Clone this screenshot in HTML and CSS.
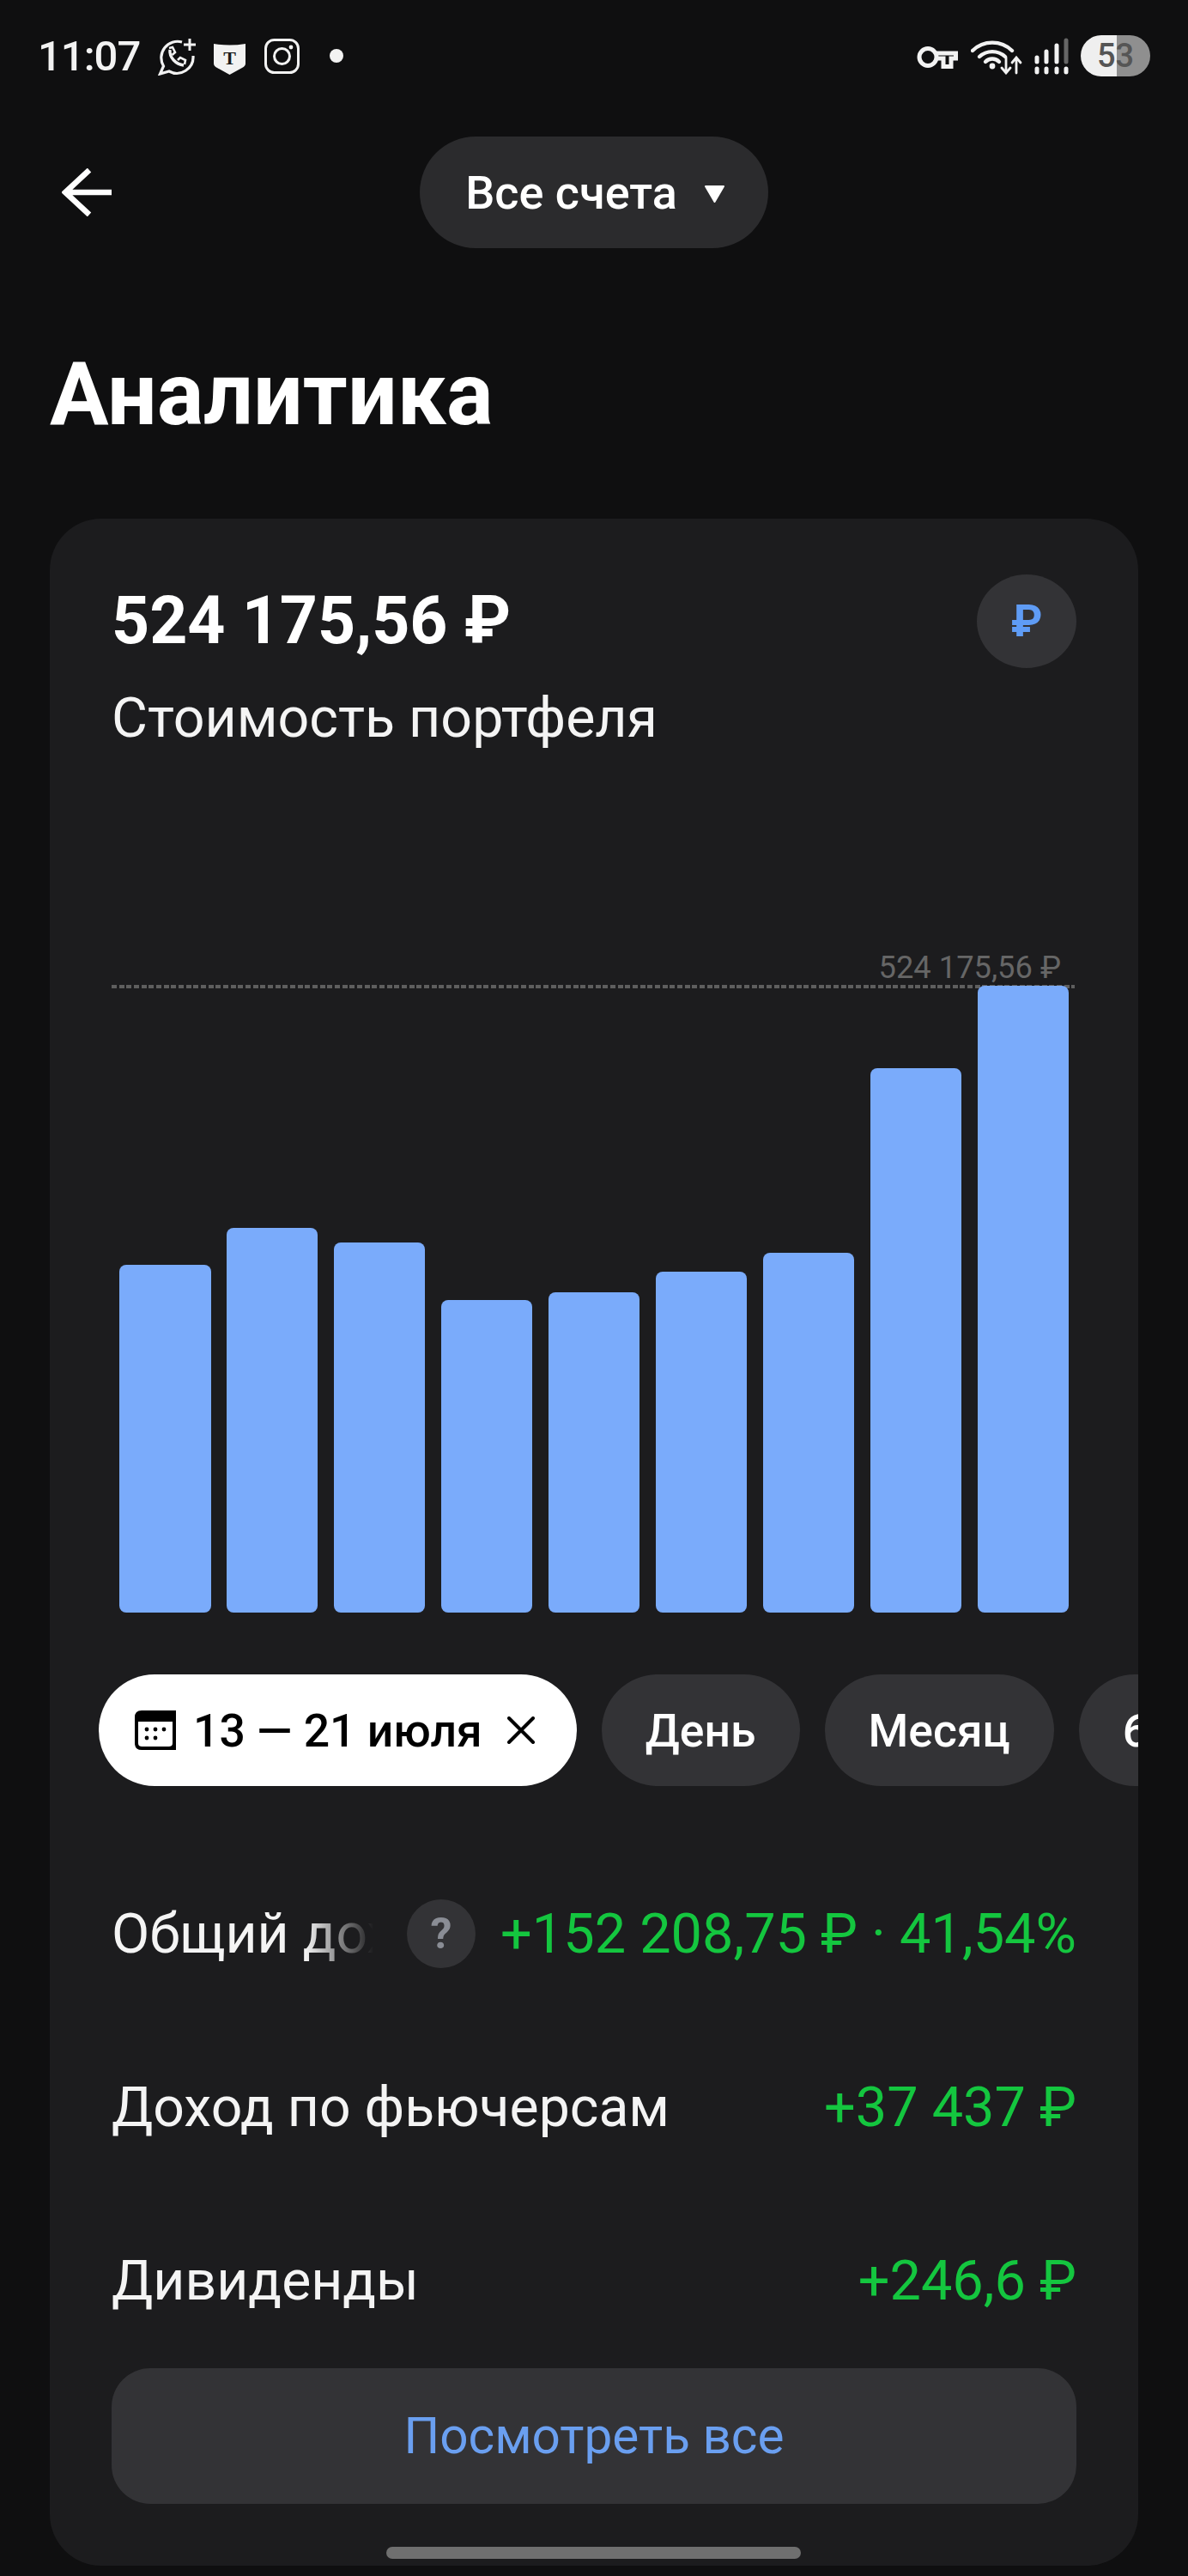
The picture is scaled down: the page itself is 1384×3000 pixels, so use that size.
FILE: index.html
```html
<!DOCTYPE html>
<html lang="ru">
<head>
    <meta charset="UTF-8">
    <meta name="viewport" content="width=device-width, initial-scale=1.0">
    <title>Аналитика</title>
    <link rel="stylesheet" href="styles.css">
</head>
<body>
    <div class="status-bar">
        <div class="status-left">
            <span class="time">11:07</span>
            <svg class="icon-whatsapp" viewBox="0 0 46 45" fill="none" stroke="#f2f2f2" stroke-width="3.2">
                <path d="M28 6 A19 19 0 0 0 6.5 34 L2.5 43 L13 40 A19 19 0 0 0 41 22"/>
                <path d="M37 2 V16 M30 9 H44" stroke-width="3"/>
                <path d="M14 15 C13 24 21 32 30 33" stroke-width="3.4"/>
                <path d="M13 13 L17 12 L20 18 L16.5 21 M23 27 L26 24 L32 27 L31 32" stroke-width="2.6"/>
            </svg>
            <svg class="icon-shield" viewBox="0 0 37 37">
                <path d="M0 1 Q18.5 4 37 1 V24 Q37 27 33 29 L18.5 37 L4 29 Q0 27 0 24 Z" fill="#f2f2f2"/>
                <text x="18.5" y="25" text-anchor="middle" class="shield-letter">T</text>
            </svg>
            <svg class="icon-insta" viewBox="0 0 41 41" fill="none" stroke="#f2f2f2" stroke-width="3">
                <rect x="1.5" y="1.5" width="38" height="38" rx="10"/>
                <circle cx="20.5" cy="20.5" r="9"/>
                <circle cx="31" cy="10" r="2.4" fill="#f2f2f2" stroke="none"/>
            </svg>
            <span class="status-dot"></span>
        </div>
        <div class="status-right">
            <svg class="icon-key" viewBox="0 0 48 27" fill="none" stroke="#f2f2f2" stroke-width="5">
                <circle cx="13" cy="13.5" r="10"/>
                <path d="M23 9 H45.5 V15 H40 V24.5 H31 V15 H23"/>
            </svg>
            <svg class="icon-wifi" viewBox="0 0 60 43" fill="none" stroke="#f2f2f2" stroke-width="4.4" stroke-linecap="round">
                <path d="M2 15 A33 33 0 0 1 48 15"/>
                <path d="M10 22 A22 22 0 0 1 40 22"/>
                <path d="M17 28 A11 11 0 0 1 33 28"/>
                <circle cx="25" cy="33" r="3.4" fill="#f2f2f2" stroke="none"/>
                <path d="M41 23 V41 M36 35 L41 41 L46 35" stroke-width="2.8"/>
                <path d="M53 41 V24 M48 29 L53 23 L58 29" stroke-width="2.8"/>
            </svg>
            <svg class="icon-signal" viewBox="0 0 40 43" stroke-linecap="round" stroke-width="5" fill="none">
                <path d="M3 23 V28 M3 36 V40 M14 16 V28 M14 36 V40 M26 9 V28 M26 36 V40 M37 36 V40" stroke="#f2f2f2"/>
                <path d="M37 3 V28" stroke="#666"/>
            </svg>
            <span class="battery">53</span>
        </div>
    </div>

    <div class="top-nav">
        <svg class="icon-back" viewBox="0 0 58 56" fill="none" stroke="#fff" stroke-width="6.5">
            <path d="M32 2 L4 28 L32 54 M4 28 H58"/>
        </svg>
        <div class="account-pill">
            <span>Все счета</span>
            <svg class="icon-caret" viewBox="0 0 25 20"><path d="M2 1 H23 L12.5 19 Z" fill="#fff" stroke="#fff" stroke-width="2" stroke-linejoin="round"/></svg>
        </div>
    </div>

    <h1 class="page-title">Аналитика</h1>

    <div class="card">
        <div class="card-head">
            <div class="amount">524 175,56 ₽</div>
            <div class="currency-btn">₽</div>
        </div>
        <p class="subtitle">Стоимость портфеля</p>

        <div class="chart">
            <div class="chart-label">524 175,56 ₽</div>
            <div class="chart-line"></div>
            <div class="bars">
                <div class="bar" style="height: 405px"></div>
                <div class="bar" style="height: 448px"></div>
                <div class="bar" style="height: 431px"></div>
                <div class="bar" style="height: 364px"></div>
                <div class="bar" style="height: 373px"></div>
                <div class="bar" style="height: 397px"></div>
                <div class="bar" style="height: 419px"></div>
                <div class="bar" style="height: 634px"></div>
                <div class="bar" style="height: 730px"></div>
            </div>
        </div>

        <div class="chips">
            <div class="chip chip-active">
                <svg class="icon-calendar" viewBox="0 0 48 46">
                    <path d="M8 0 H48 V46 H8 Q0 46 0 38 V8 Q0 0 8 0 Z" fill="#000"/>
                    <path d="M4 13 H44 V38 Q44 42 40 42 H8 Q4 42 4 38 Z" fill="#fff"/>
                    <g fill="#000">
                        <circle cx="14" cy="22" r="2.4"/>
                        <circle cx="24" cy="22" r="2.4"/>
                        <circle cx="34" cy="22" r="2.4"/>
                        <circle cx="14" cy="32" r="2.4"/>
                        <circle cx="24" cy="32" r="2.4"/>
                    </g>
                </svg>
                <span>13 — 21 июля</span>
                <svg class="icon-close" viewBox="0 0 32 32" fill="none" stroke="#000" stroke-width="4" stroke-linecap="round">
                    <path d="M2 2 L30 30 M30 2 L2 30"/>
                </svg>
            </div>
            <div class="chip">День</div>
            <div class="chip">Месяц</div>
            <div class="chip">6 месяцев</div>
        </div>

        <div class="rows">
            <div class="row">
                <span class="row-label row-label-fade">Общий доход</span>
                <span class="help">?</span>
                <span class="row-value">+152 208,75 ₽ · 41,54%</span>
            </div>
            <div class="row">
                <span class="row-label">Доход по фьючерсам</span>
                <span class="row-value">+37 437 ₽</span>
            </div>
            <div class="row">
                <span class="row-label">Дивиденды</span>
                <span class="row-value">+246,6 ₽</span>
            </div>
        </div>

        <div class="all-btn">Посмотреть все</div>
    </div>

    <div class="home-bar"></div>
</body>
</html>
```

FILE: styles.css
```css
* {
    margin: 0;
    padding: 0;
    box-sizing: border-box;
    font-family: Roboto, "Noto Sans", sans-serif;
}

body {
    position: relative;
    width: 1384px;
    height: 3000px;
    overflow: hidden;
    background: #0f0f10;
    color: #fff;
}

svg {
    display: block;
    flex: none;
}

/* status bar */
.status-bar {
    display: flex;
    justify-content: space-between;
    align-items: center;
    height: 130px;
    padding: 0 44px;
}

.status-left,
.status-right {
    display: flex;
    align-items: center;
}

.time {
    width: 117px;
    font-size: 49px;
    font-weight: 500;
    letter-spacing: -1px;
    color: #f2f2f2;
    white-space: nowrap;
}

.icon-whatsapp {
    width: 46px;
    height: 45px;
    margin-left: 23px;
}

.icon-shield {
    width: 37px;
    height: 37px;
    margin-left: 19px;
    margin-top: 7px;
}

.shield-letter {
    font-family: "Liberation Serif", serif;
    font-size: 22px;
    font-weight: 700;
    fill: #1a1a1a;
}

.icon-insta {
    width: 41px;
    height: 41px;
    margin-left: 22px;
}

.status-dot {
    width: 16px;
    height: 16px;
    margin-left: 35px;
    border-radius: 50%;
    background: #f2f2f2;
}

.icon-key {
    width: 48px;
    height: 27px;
    margin-top: 3px;
}

.icon-wifi {
    width: 60px;
    height: 43px;
    margin-left: 15px;
    margin-top: 1px;
}

.icon-signal {
    width: 40px;
    height: 43px;
    margin-left: 14px;
    margin-top: 1px;
}

.battery {
    width: 81px;
    height: 48px;
    margin-left: 14px;
    border-radius: 24px;
    background: linear-gradient(90deg, #efefef 52%, #8f8f8f 52%);
    color: #555;
    font-size: 38px;
    font-weight: 500;
    line-height: 48px;
    text-align: center;
}

/* header */
.top-nav {
    display: grid;
    grid-template-columns: 1fr auto 1fr;
    align-items: center;
    margin-top: 29px;
    padding: 0 72px;
}

.icon-back {
    width: 58px;
    height: 56px;
}

.account-pill {
    display: flex;
    align-items: center;
    gap: 31px;
    height: 130px;
    padding: 0 50px 0 53px;
    border-radius: 65px;
    background: #2b2b2d;
    font-size: 54px;
    font-weight: 500;
    white-space: nowrap;
}

.icon-caret {
    width: 25px;
    height: 20px;
    margin-top: 4px;
}

.page-title {
    margin: 105px 0 80px 58px;
    font-size: 102px;
    font-weight: 700;
    line-height: 130px;
}

/* card */
.card {
    height: 2384px;
    margin: 0 58px;
    padding: 65px 72px 0;
    border-radius: 60px;
    background: #1c1c1e;
    overflow: hidden;
}

.card-head {
    display: flex;
    justify-content: space-between;
    align-items: center;
}

.amount {
    font-size: 77px;
    font-weight: 700;
    line-height: 109px;
}

.currency-btn {
    width: 116px;
    height: 109px;
    border-radius: 50%;
    background: #333336;
    color: #5f9cf5;
    font-size: 52px;
    font-weight: 700;
    line-height: 109px;
    text-align: center;
}

.subtitle {
    margin-top: 18px;
    font-size: 64.5px;
    line-height: 80px;
    color: #f4f4f4;
}

/* chart */
.chart {
    margin-top: 230px;
}

.chart-label {
    padding-right: 18px;
    font-size: 36.3px;
    line-height: 42px;
    color: #666;
    text-align: right;
}

.chart-line {
    width: 1122px;
    height: 4px;
    margin-top: -1px;
    background: repeating-linear-gradient(90deg, #5e5e5e 0 6px, transparent 6px 8.67px);
}

.bars {
    display: flex;
    align-items: flex-end;
    justify-content: space-between;
    margin-top: -3px;
    padding: 0 9px;
}

.bar {
    width: 106.5px;
    border-radius: 8px;
    background: #7aabfb;
}

/* period chips */
.chips {
    display: flex;
    gap: 29px;
    margin: 72px -72px 0 -15px;
}

.chip {
    display: flex;
    align-items: center;
    flex: none;
    height: 130px;
    padding: 0 51px;
    border-radius: 65px;
    background: #333336;
    font-size: 53.5px;
    font-weight: 500;
    white-space: nowrap;
}

.chip-active {
    padding: 0 49px 0 42px;
    background: #fff;
    color: #000;
}

.icon-calendar {
    width: 48px;
    height: 46px;
    margin-right: 20px;
}

.icon-close {
    width: 32px;
    height: 32px;
    margin-left: 29px;
}

/* rows */
.rows {
    margin-top: 71px;
}

.row {
    display: flex;
    align-items: center;
    height: 202px;
}

.row-label {
    font-size: 64.3px;
    line-height: 80px;
    white-space: nowrap;
    color: #f4f4f4;
}

.row-label-fade {
    width: 305px;
    overflow: hidden;
    -webkit-mask-image: linear-gradient(90deg, #000 74%, transparent 100%);
    mask-image: linear-gradient(90deg, #000 74%, transparent 100%);
}

.help {
    width: 80px;
    height: 80px;
    margin-left: 39px;
    border-radius: 50%;
    background: #333336;
    color: #8a8d95;
    font-size: 50px;
    font-weight: 700;
    line-height: 80px;
    text-align: center;
}

.row-value {
    margin-left: auto;
    font-size: 64.8px;
    line-height: 80px;
    white-space: nowrap;
    color: #14c63f;
}

.all-btn {
    height: 158px;
    margin-top: 1px;
    border-radius: 45px;
    background: #333336;
    color: #6a9ff0;
    font-size: 58.5px;
    line-height: 158px;
    text-align: center;
}

.home-bar {
    position: absolute;
    left: 450px;
    top: 2966px;
    width: 483px;
    height: 14px;
    border-radius: 7px;
    background: #6f6f6f;
}
```
